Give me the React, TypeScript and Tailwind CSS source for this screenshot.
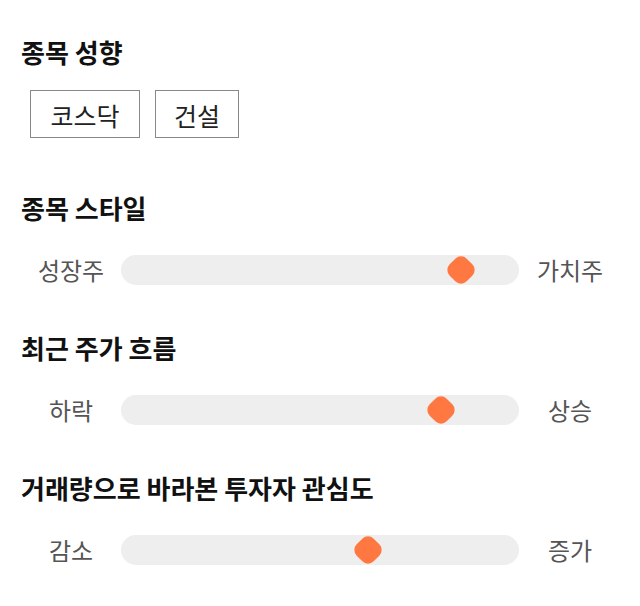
const font = { fontFamily: '"Noto Sans CJK KR", "Noto Sans", sans-serif' };

type SliderProps = {
  left: string;
  right: string;
  value: number;
};

const Slider = ({ left, right, value }: SliderProps) => {
  return (
    <div className="flex flex-row items-center h-[30px]">
      <div className="w-[100px] text-center text-[24px] leading-[30px] text-[#555]">{left}</div>
      <div className="relative w-[398px] h-[30px] rounded-full bg-[#eeeeee]">
        {/* thumb */}
        <div
          className="absolute top-[3px] w-[24px] h-[24px] -ml-[12px] rotate-45 rounded-[8px] bg-[#ff7842]"
          style={{ left: `${value}%` }}
        />
      </div>
      <div className="w-[102px] text-center text-[24px] leading-[30px] text-[#555]">{right}</div>
    </div>
  );
};

const Heading = ({ children }: { children: string }) => (
  <h2 className="text-[26px] leading-[32px] font-bold text-[#111] px-[21px]">{children}</h2>
);

export default function App() {
  return (
    <div className="w-[640px] h-[606px] bg-white pt-[36px]" style={font}>
      <Heading>종목 성향</Heading>
      <div className="flex flex-row gap-[15px] mt-[22px] ml-[30px]">
        <button className="w-[110px] h-[48px] border border-[#888] text-[25px] text-[#222] pt-[4px]">코스닥</button>
        <button className="w-[84px] h-[48px] border border-[#888] text-[25px] text-[#222] pt-[4px]">건설</button>
      </div>

      <div className="mt-[54px]">
        <Heading>종목 스타일</Heading>
      </div>
      <div className="mt-[31px] pl-[21px]">
        <Slider left="성장주" right="가치주" value={85.4} />
      </div>

      <div className="mt-[47px]">
        <Heading>최근 주가 흐름</Heading>
      </div>
      <div className="mt-[31px] pl-[21px]">
        <Slider left="하락" right="상승" value={80.4} />
      </div>

      <div className="mt-[47px]">
        <Heading>거래량으로 바라본 투자자 관심도</Heading>
      </div>
      <div className="mt-[31px] pl-[21px]">
        <Slider left="감소" right="증가" value={62} />
      </div>
    </div>
  );
}
